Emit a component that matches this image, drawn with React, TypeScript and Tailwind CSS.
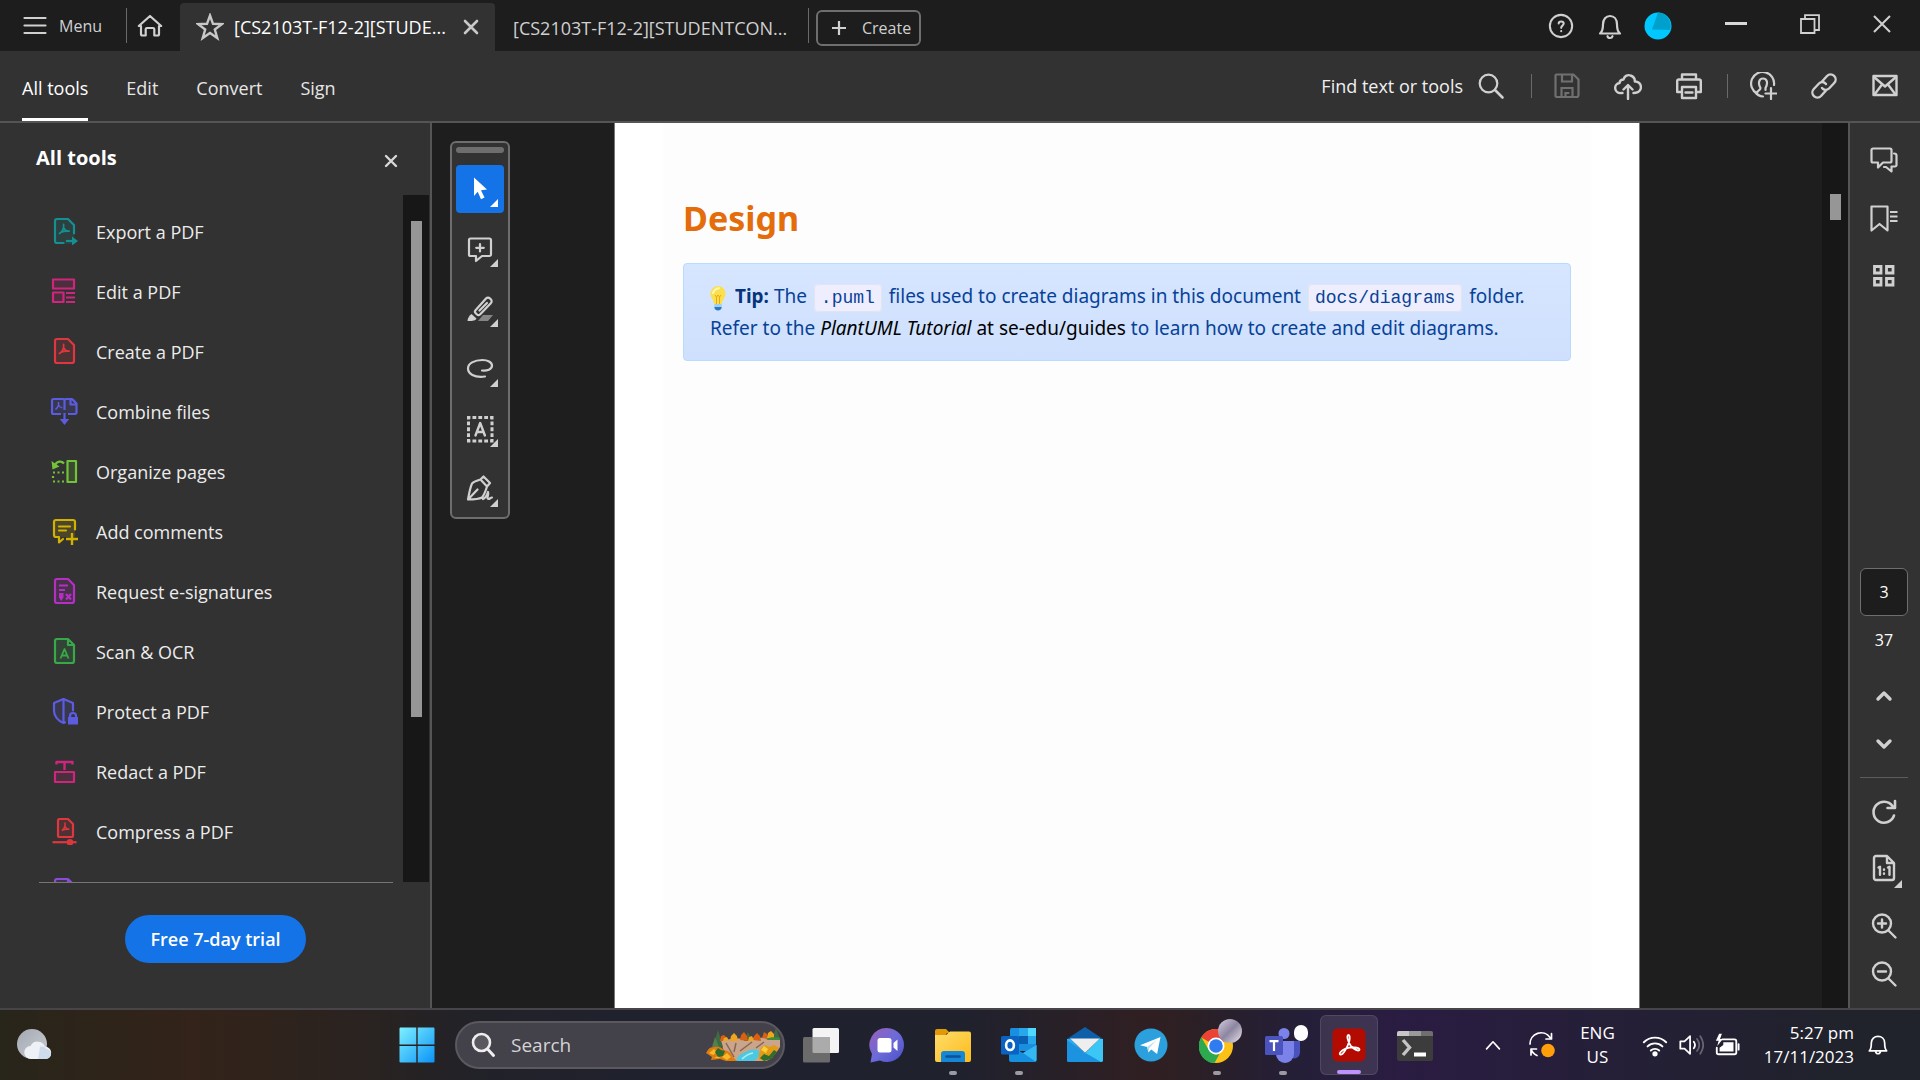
import React from 'react';

type P = { className?: string };

const AcroMark = () => (
  <g fill="none" strokeWidth="1.7" strokeLinecap="round" strokeLinejoin="round">
    <path d="M13.6 7.4v3.400c-.6 2.400-2.200 4.600-4.200 5.800M13.6 10.8c1 2 3 3.200 5.600 3.400M10.6 15.4c2.600-1.200 5.400-1.600 8.400-1.200" />
  </g>
);

const ListIcon = ({ color, children }: { color: string; children: React.ReactNode }) => (
  <svg viewBox="0 0 28 28" className="h-7 w-7 shrink-0" fill={color} fillOpacity="0.16" stroke={color} strokeWidth="2.2" strokeLinejoin="round" aria-hidden="true">
    {children}
  </svg>
);

const tools: { label: string; color: string; art: React.ReactNode }[] = [
  {
    label: 'Export a PDF',
    color: '#168f92',
    art: (
      <>
        <path stroke="none" d="M5 4a2 2 0 0 1 2-2h11l6 6v19H5z" />
        <path fill="none" strokeLinecap="round" d="M13.5 26H7a2 2 0 0 1-2-2V4a2 2 0 0 1 2-2h11l6 6v8.5" />
        <AcroMark />
        <path fill="none" d="M16 24h8" />
        <path stroke="none" fillOpacity="1" d="M22 19.5l6 4.5-6 4.5z" />
      </>
    ),
  },
  {
    label: 'Edit a PDF',
    color: '#d0257f',
    art: (
      <>
        <rect x="3" y="2.5" width="21" height="9" />
        <rect x="3" y="15.5" width="10.5" height="9.5" />
        <path fill="none" d="M16 16h9M16 20.500h9M16 25h9" />
      </>
    ),
  },
  {
    label: 'Create a PDF',
    color: '#df3640',
    art: (
      <>
        <path d="M5 4a2 2 0 0 1 2-2h11l6 6v16a2 2 0 0 1-2 2H7a2 2 0 0 1-2-2z" />
        <AcroMark />
      </>
    ),
  },
  {
    label: 'Combine files',
    color: '#5c5ce0',
    art: (
      <>
        <path stroke="none" d="M2 2h24v15H2z" />
        <path fill="none" d="M11 17H3.500a1.500 1.500 0 0 1-1.500-1.500v-12A1.500 1.500 0 0 1 3.500 2H13c1 0 1.500.5 1.500 1.500v9.500M14.500 3.500c0-1 .5-1.500 1.500-1.500h6l4.500 4.500v9A1.500 1.500 0 0 1 25 17h-7M20.500 2.500v5H26" />
        <path fill="none" strokeWidth="1.5" d="M8.500 5v3c-.5 2-1.600 3.600-3 4.500M8.500 8c.8 1.600 2 2.600 3.800 2.800" />
        <path fill="none" d="M14.500 16v8" />
        <path stroke="none" fillOpacity="1" d="M9.800 22h9.400l-4.700 6z" />
      </>
    ),
  },
  {
    label: 'Organize pages',
    color: '#72c23a',
    art: (
      <>
        <rect x="17.5" y="4" width="8.5" height="21" />
        <path fill="none" d="M14 6.500C11.500 3.500 7 4 5 8" />
        <path stroke="none" fillOpacity="1" d="M1.500 4l1 8.500 7-3z" />
        <path fill="none" strokeDasharray="2 2.5" d="M3 15.500h12M3 24.500h12" />
        <path fill="none" d="M3 19v2" />
      </>
    ),
  },
  {
    label: 'Add comments',
    color: '#d2b100',
    art: (
      <>
        <path stroke="none" d="M4 3h21v17H4z" />
        <path fill="none" strokeLinecap="round" d="M25 12.500V5a2 2 0 0 0-2-2H6a2 2 0 0 0-2 2v13a2 2 0 0 0 2 2h3v5.500l4-3.500M9 9.500h11M9 13.500h7" />
        <path fill="none" strokeWidth="2.4" d="M22 16v12M16 22h12" />
      </>
    ),
  },
  {
    label: 'Request e-signatures',
    color: '#b62fc4',
    art: (
      <>
        <path d="M5 4a2 2 0 0 1 2-2h11l6 6v16a2 2 0 0 1-2 2H7a2 2 0 0 1-2-2z" />
        <path fill="none" d="M9 8.500h9M9 13h6" />
        <path stroke="none" fillOpacity="1" d="M9 16h4.500v4.500L11.200 24 9 20.500z" />
        <path fill="none" d="M16 17l5 5.500M21 17l-5 5.500" />
      </>
    ),
  },
  {
    label: 'Scan & OCR',
    color: '#39a84a',
    art: (
      <>
        <path d="M5 4a2 2 0 0 1 2-2h11l6 6v16a2 2 0 0 1-2 2H7a2 2 0 0 1-2-2zM18 2.500V8h5.500" />
        <path fill="none" strokeWidth="1.8" d="M10.500 21.500l4-9.500 4 9.500M12 18.500h5" />
      </>
    ),
  },
  {
    label: 'Protect a PDF',
    color: '#5c5ce0',
    art: (
      <>
        <path stroke="none" d="M4 6l9-4 10 4v14l-9 7c-6-3-10-7-10-12z" />
        <path fill="none" strokeLinecap="round" d="M23 13.500V6L13.500 2 4 6v8c0 5 4 10 9.500 12l1.500-.5M13.500 2v24" />
        <rect x="18" y="20" width="10" height="7.5" stroke="none" fillOpacity="1" />
        <path fill="none" d="M20 20.500v-1.500a3 3 0 0 1 6 0v1.500" />
      </>
    ),
  },
  {
    label: 'Redact a PDF',
    color: '#d0257f',
    art: (
      <>
        <rect x="5" y="15" width="19" height="10" />
        <path fill="none" strokeWidth="2.4" d="M6.500 7.500V5h16v2.500M14.500 5v8" />
      </>
    ),
  },
  {
    label: 'Compress a PDF',
    color: '#df3640',
    art: (
      <>
        <path d="M8 3.500A1.500 1.500 0 0 1 9.500 2H18l5 5v11.500a1.500 1.500 0 0 1-1.500 1.500h-12A1.500 1.500 0 0 1 8 18.500z" />
        <path fill="none" strokeWidth="1.5" d="M15 5.500v3.500c-.5 2-1.600 3.600-3.200 4.800M15 9.500c.8 1.800 2.200 2.600 4.400 2.800M12.500 13.200c2-1 4.400-1.200 6.500-.9" />
        <path fill="none" d="M2.500 25.200h24" />
        <circle cx="20" cy="25.2" r="2.2" />
      </>
    ),
  },
];

const S = ({ className = 'h-7 w-7', children, w = 2.2 }: { className?: string; children: React.ReactNode; w?: number }) => (
  <svg viewBox="0 0 28 28" className={className} fill="none" stroke="currentColor" strokeWidth={w} strokeLinejoin="round" strokeLinecap="round" aria-hidden="true">
    {children}
  </svg>
);

function TitleBar() {
  return (
    <header className="flex h-[51px] shrink-0 items-center bg-[#1d1d1d] text-[#d0d0d0]">
      <button className="ml-[23px] flex items-center gap-3 pt-px text-base">
        <svg viewBox="0 0 24 24" className="h-6 w-6" fill="none" stroke="currentColor" strokeWidth="2.2" strokeLinecap="round" aria-hidden="true">
          <path d="M1.500 4h21M1.500 11.500h21M1.500 19h21" />
        </svg>
        Menu
      </button>
      <span className="ml-6 h-[35px] w-px bg-[#6a6a6a]" />
      <button aria-label="Home" className="ml-[9px]">
        <S>
          <path d="M5 14H2.800L14 4l11.200 10H23v8a1.500 1.500 0 0 1-1.500 1.500h-3.200v-6.300a1.300 1.300 0 0 0-1.300-1.200h-6a1.300 1.300 0 0 0-1.300 1.200v6.300H6.500A1.500 1.500 0 0 1 5 22z" />
        </S>
      </button>
      <div className="ml-4 flex h-12 w-[315px] items-center self-end rounded-t bg-[#323232] pl-4 text-white">
        <S className="h-7 w-7 text-[#c8c8c8]" w={2.4}>
          <path strokeLinejoin="miter" d="M14 2.500l3 8.300 8.800.3-7 5.400 2.500 8.500-7.300-5-7.300 5 2.500-8.500-7-5.400 8.800-.3z" />
        </S>
        <button className="ml-2.5 text-lg">[CS2103T-F12-2][STUDE...</button>
        <button aria-label="Close tab" className="ml-auto mr-4 text-[#c8c8c8]">
          <svg viewBox="0 0 16 16" className="h-4 w-4" fill="none" stroke="currentColor" strokeWidth="2.6" strokeLinecap="round" aria-hidden="true">
            <path d="M2 2l12 12M14 2L2 14" />
          </svg>
        </button>
      </div>
      <button className="flex h-[35px] w-[314px] items-center border-r border-[#6a6a6a] pl-[18px] pt-1 text-lg">[CS2103T-F12-2][STUDENTCON...</button>
      <button className="ml-[7px] mt-1 flex h-9 w-[105px] items-center gap-3.5 rounded-md border-2 border-[#6e6e6e] pl-3 text-base">
        <svg viewBox="0 0 18 18" className="h-[18px] w-[18px]" fill="none" stroke="currentColor" strokeWidth="2.2" aria-hidden="true">
          <path d="M9 2v14M2 9h14" />
        </svg>
        Create
      </button>
      <div className="ml-auto flex items-center pr-[29px]">
        <button aria-label="Help">
          <S className="h-[26px] w-[26px]">
            <circle cx="14" cy="14" r="12" />
            <path d="M11.500 11.300c0-3 5.400-3 5.400 0 0 2-2.700 2.200-2.700 4.700M14.200 19.500v.2" />
          </S>
        </button>
        <button aria-label="Notifications" className="ml-[22px]">
          <S>
            <path d="M4 21.500c2.500-2 3-4 3-9C7 7 10 4 14 4s7 3 7 8.500c0 5 .5 7 3 9zM11.500 24.200c.6 2.400 4.400 2.400 5 0" />
          </S>
        </button>
        <button aria-label="Account" className="ml-5">
          <svg viewBox="0 0 28 28" className="h-7 w-7" aria-hidden="true">
            <circle cx="14" cy="14" r="13.5" fill="#00c8ff" />
            <path d="M14 .5A13.500 13.500 0 0 1 26 18L8 17.500z" fill="#00a0cc" />
          </svg>
        </button>
        <button aria-label="Minimize" className="ml-[53px] pb-1">
          <span className="block h-[3px] w-[22px] bg-[#d8d8d8]" />
        </button>
        <button aria-label="Restore" className="ml-[53px] pb-1">
          <svg viewBox="0 0 20 20" className="h-5 w-5" fill="none" stroke="currentColor" strokeWidth="1.8" aria-hidden="true">
            <path d="M1 5h13.500v14H1zM5 5V1.200h14V16h-4.500" />
          </svg>
        </button>
        <button aria-label="Close" className="ml-[53px] pb-1">
          <svg viewBox="0 0 18 18" className="h-[18px] w-[18px]" fill="none" stroke="currentColor" strokeWidth="2" aria-hidden="true">
            <path d="M1 1l16 16M17 1L1 17" />
          </svg>
        </button>
      </div>
    </header>
  );
}

function ToolBar() {
  return (
    <div className="flex h-[72px] shrink-0 items-center border-b-2 border-[#555] bg-[#323232] text-lg text-[#e6e6e6]">
      <nav className="flex h-full items-stretch gap-[38px] pl-[22px]">
        <button className="flex items-center border-b-[3px] border-white pt-1.5 text-white">All tools</button>
        <button className="pt-1">Edit</button>
        <button className="pt-1">Convert</button>
        <button className="pt-1">Sign</button>
      </nav>
      <div className="ml-auto flex items-center pr-[21px] text-[#d0d0d0]">
        <button className="flex items-center gap-3.5 text-[#f0f0f0]">
          Find text or tools
          <S className="h-7 w-7 text-[#d0d0d0]">
            <circle cx="11.5" cy="11.5" r="8.8" />
            <path d="M18 18l7.500 7.500" strokeWidth="2.6" />
          </S>
        </button>
        <span className="ml-[26px] h-6 w-px bg-[#6a6a6a]" />
        <button aria-label="Save" disabled className="ml-[21px] text-[#707070]">
          <S>
            <path d="M3.500 2.500h17l5 5V23a2 2 0 0 1-2 2h-20a1 1 0 0 1-1-1V3.500a1 1 0 0 1 1-1zM9 3v6.500h10V3M8.500 25v-9h11v9M12.500 25v-4h3" strokeLinejoin="miter" />
          </S>
        </button>
        <button aria-label="Upload to cloud" className="ml-[33px]">
          <S w={2.4}>
            <path d="M8.500 21H7a5 5 0 0 1-1.500-10 4 4 0 0 1 4-3.500c1-4 4.500-5 7-4 3 1 4.500 3.500 4.300 6a5.500 5.500 0 0 1 1 11.200L19.500 21M14 27V13.500M9.500 17.500l4.500-4.500 4.500 4.500" />
          </S>
        </button>
        <button aria-label="Print" className="ml-[33px]">
          <S w={2.4}>
            <path d="M7 7V2.500h14V7M6.500 20H2.200V9a1.500 1.500 0 0 1 1.500-1.500h20.600A1.500 1.500 0 0 1 25.800 9v11h-4.300M7 15h14v11H7zM10.500 20.500h7" />
          </S>
        </button>
        <span className="ml-6 h-6 w-px bg-[#6a6a6a]" />
        <button aria-label="Share with others" className="ml-[21px]">
          <S>
            <path d="M8 21.500A11.500 11.500 0 1 1 25 13M8 21.500c0-3 3.500-3 3.500-5.500C9 12 9.500 6.500 14 6.500s5 5 2.500 9.500v2M6 20a11 11 0 0 0 8 4.500M22 16v11M16.500 21.500h11" />
          </S>
        </button>
        <button aria-label="Copy link" className="ml-[33px]">
          <S w={2.4}>
            <path d="M12 9.500l5-5.500a5 5 0 0 1 7.200 7L19 16.500c-2 2-5 2-7-.5M16 18.500L11 24a5 5 0 0 1-7.200-7L9 11.500c2-2 5-2 7 .5" />
          </S>
        </button>
        <button aria-label="Email" className="ml-[33px]">
          <S w={2.4}>
            <rect x="2.5" y="4" width="23" height="19" />
            <path d="M3 5l11 9.500L25 5M3.500 22.500l7.500-10M24.500 22.500L17 12.500" />
          </S>
        </button>
      </div>
    </div>
  );
}

function ToolsPanel() {
  return (
    <aside className="flex w-[432px] shrink-0 flex-col border-r-2 border-[#555] bg-[#323232]">
      <div className="flex h-[72px] shrink-0 items-center justify-between pb-0.5 pl-9 pr-8">
        <h2 className="text-xl font-bold text-white">All tools</h2>
        <button aria-label="Close panel" className="pt-1.5 text-[#d8d8d8]">
          <svg viewBox="0 0 14 14" className="h-3.5 w-3.5" fill="none" stroke="currentColor" strokeWidth="2.4" strokeLinecap="round" aria-hidden="true">
            <path d="M2 2l10 10M12 2L2 12" />
          </svg>
        </button>
      </div>
      <div className="flex min-h-0 flex-1">
        <ul className="min-w-0 flex-1 overflow-hidden pt-1.5 text-lg text-[#ececec]">
          {tools.map((t) => (
            <li key={t.label}>
              <button className="flex h-[60px] w-full items-center gap-[18px] pl-[50px] text-left">
                <ListIcon color={t.color}>{t.art}</ListIcon>
                <span className="pt-0.5">{t.label}</span>
              </button>
            </li>
          ))}
          <li className="flex h-[60px] items-center pl-[50px]">
            <ListIcon color="#8a4cd6">
              <path d="M5 4a2 2 0 0 1 2-2h11l6 6v16a2 2 0 0 1-2 2H7a2 2 0 0 1-2-2zM18 2.500V8h5.500" />
            </ListIcon>
          </li>
        </ul>
        <div className="mr-px flex w-[26px] flex-col items-center bg-[#171717] pt-[26px]">
          <div className="h-3/4 w-[11px] bg-[#969696]" />
        </div>
      </div>
      <div className="flex h-[126px] shrink-0 flex-col">
        <div className="ml-[39px] mr-[37px] h-px shrink-0 bg-[#757575]" />
        <button className="ml-[125px] mt-8 h-12 w-[181px] rounded-full bg-[#1473e6] text-lg font-semibold text-white">Free 7-day trial</button>
      </div>
    </aside>
  );
}

const Corner = ({ className = '' }: P) => (
  <svg viewBox="0 0 8 8" className={`h-2 w-2 ${className}`} fill="currentColor" aria-hidden="true">
    <path d="M8 0v8H0z" />
  </svg>
);

const quick: { label: string; active?: boolean; art: React.ReactNode }[] = [
  {
    label: 'Select',
    active: true,
    art: <path fill="currentColor" stroke="none" d="M8 2.500l13 12-6 .8 3.500 7.200-3.500 1.700-3.300-7.400L8 21z" />,
  },
  {
    label: 'Add comment',
    art: (
      <path d="M4.500 3.500h19a1.500 1.500 0 0 1 1.500 1.500v14.500a1.500 1.500 0 0 1-1.500 1.500H16l-6 5v-5H4.500A1.500 1.500 0 0 1 3 19.500V5a1.500 1.500 0 0 1 1.500-1.500zM14 9v7.500M10.200 12.800h7.600" />
    ),
  },
  {
    label: 'Highlight',
    art: (
      <>
        <path stroke="none" fill="#858585" d="M17 20h10l-5 6H12z" />
        <path d="M20 3.500a2.800 2.800 0 0 1 4 0l.8.8a2.800 2.800 0 0 1 0 4L14 19.500c-1 .8-2 .8-3 0l-1.500-1.500c-.8-.8-.8-1.800 0-2.800zM13.500 15.500L21 8" />
        <path stroke="none" fill="currentColor" d="M5.500 19l5 4.500c-1 2-3 2.500-9 2.500 0-3 2-5.500 4-7z" />
      </>
    ),
  },
  {
    label: 'Draw',
    art: <path d="M16 15.500c5 .5 10-1 10-5 0-3.500-4.500-5.500-9.500-5.500C8 5 2 8.500 2 13.500S8 23 19 21.500" />,
  },
  {
    label: 'Select text',
    art: (
      <>
        <rect x="2.5" y="2.5" width="23.5" height="23.5" strokeWidth="3" strokeDasharray="3.8 2.075" strokeDashoffset="1.9" strokeLinecap="butt" strokeLinejoin="miter" />
        <path d="M9.500 20.500L14.200 8l4.700 12.500M11 17h6.500" strokeWidth="2.4" />
      </>
    ),
  },
  {
    label: 'Fill and sign',
    art: (
      <path d="M14.500 4.500l3-3 6.500 6.500-3 3.500zM14.500 4.500C11 5.500 8 6.500 6 8.500 4 13 3 19 2 24.500c5.500 0 11-.5 14-2 2-2.500 3.500-6 5-11M2.500 24l9-9.500M17 24c2.500-1 4-4 5-7 1 3-2 7 .5 7 1.500 0 2-1.500 3.500-1.500" />
    ),
  },
];

function QuickTools() {
  return (
    <div className="absolute left-[18px] top-[18px] flex w-[60px] flex-col items-center rounded-md border-2 border-[#6e6e6e] bg-[#323232] pb-1 pt-1">
      <div className="mb-3 h-1.5 w-12 rounded-full bg-[#6e6e6e]" />
      <div className="flex flex-col gap-3">
        {quick.map((q) => (
          <button key={q.label} aria-label={q.label} className={q.active ? 'relative flex h-12 w-12 items-center justify-center rounded bg-[#1473e6] text-white' : 'relative flex h-12 w-12 items-center justify-center text-[#d0d0d0]'}>
            <S>{q.art}</S>
            <Corner className="absolute bottom-1.5 right-1.5" />
          </button>
        ))}
      </div>
    </div>
  );
}

const Bulb = () => (
  <svg viewBox="0 0 16 26" className="-my-1 inline-block h-[26px] w-4 align-middle" role="img" aria-label="light bulb">
    <path d="M8 1a7.500 7.500 0 0 0-7.500 7.500C.5 13 4 14.500 4.300 20h7.400c.3-5.500 3.800-7 3.800-11.500A7.500 7.500 0 0 0 8 1z" fill="#fbe04c" />
    <path d="M3 8c1-3 3-4.500 6-4.800" fill="none" stroke="#fff7b8" strokeWidth="2" strokeLinecap="round" />
    <path d="M5 10l1.500 2.200L8 10l1.500 2.200L11 10M6.500 12v7M9.500 12v7" fill="none" stroke="#e9a91c" strokeWidth="1" />
    <rect x="4.3" y="19" width="7.4" height="3" fill="#9fd0ef" />
    <path d="M4.300 22h7.400c0 2-1.500 3.500-3.700 3.500S4.300 24 4.300 22z" fill="#2c77c4" />
  </svg>
);

const Code = ({ children }: { children: React.ReactNode }) => (
  <code className="mx-0.5 rounded border border-[#e4e4ee] bg-[#eeeefe] px-1.5 py-[3px] font-['Liberation_Mono',monospace] text-lg leading-none">{children}</code>
);

function Document() {
  return (
    <main className="relative flex min-w-0 flex-1 justify-center overflow-hidden bg-[#1e1e1e] font-['Noto_Sans',sans-serif]">
      <article className="w-full max-w-[1026px] border-x border-[#777] bg-white px-12">
        <div className="h-full bg-[#fdfdfd] px-5 pt-[71px]">
          <h1 className="text-[34px] font-bold leading-[48px] text-[#e46c0a]">Design</h1>
          <p className="mt-[21px] rounded border border-[#b8daff] bg-linear-to-b from-[#d6e6ff] to-[#cfe0fe] py-4 pl-[26px] pr-4 text-[19px] leading-8 text-[#084298]">
            <Bulb /> <strong className="ml-1 text-[#06357a]">Tip:</strong> The <Code>.puml</Code> files used to create diagrams in this document <Code>docs/diagrams</Code> folder.
            <br />
            Refer to the{' '}
            <a href="#guides" className="text-black">
              <em>PlantUML Tutorial</em> at se-edu/guides
            </a>{' '}
            to learn how to create and edit diagrams.
          </p>
        </div>
      </article>
      <QuickTools />
    </main>
  );
}

function RightRail() {
  const btn = 'flex h-12 w-12 shrink-0 items-center justify-center';
  return (
    <aside className="flex w-[72px] shrink-0 flex-col items-center border-l-2 border-[#555] bg-[#323232] pb-2.5 pr-0.5 pt-2 text-[#d0d0d0]">
      <button aria-label="Comments" className="flex h-[58px] w-12 items-center justify-center">
        <S>
          <path d="M3 2.500h17A1.500 1.500 0 0 1 21.500 4v11a1.500 1.500 0 0 1-1.500 1.500H13L8 21.500v-5H3A1.500 1.500 0 0 1 1.500 15V4A1.500 1.500 0 0 1 3 2.500zM24 7.500c1.500 0 2.500.8 2.500 2V19a1.500 1.500 0 0 1-1.500 1.500h-3.500v5L16 21h-2" />
        </S>
      </button>
      <button aria-label="Bookmarks" className="flex h-[58px] w-12 items-center justify-center">
        <S>
          <path d="M1.500 2.500h16v24l-8-6.500-8 6.500zM20 8h7.500M20 12.500h7.500M20 17h7.500" strokeLinecap="butt" />
        </S>
      </button>
      <button aria-label="Page thumbnails" className="flex h-[58px] w-12 items-center justify-center">
        <S w={2.8}>
          <path strokeLinejoin="miter" d="M4.500 4.500h6.500V11H4.500zM16.500 4.500H23V11h-6.500zM4.500 16.500h6.500V23H4.500zM16.500 16.500H23V23h-6.500z" />
        </S>
      </button>
      <input aria-label="Page number" defaultValue="3" className="mt-auto h-12 w-12 shrink-0 rounded-md border border-[#6e6e6e] bg-[#1d1d1d] text-center text-base text-white" />
      <span className="mb-2 flex h-12 shrink-0 items-center text-base text-white">37</span>
      <button aria-label="Previous page" className={btn}>
        <S w={3.4}><path d="M8 17l6-6 6 6" /></S>
      </button>
      <button aria-label="Next page" className={btn}>
        <S w={3.4}><path d="M8 11l6 6 6-6" /></S>
      </button>
      <div className="mb-2.5 mt-[9px] h-px w-12 shrink-0 bg-[#5c5c5c]" />
      <button aria-label="Rotate" className={btn}>
        <S w={2.6}><path d="M24 17.500A10.500 10.500 0 1 1 22.500 8M25 3v7h-7.500" /></S>
      </button>
      <button aria-label="Actual size" className={`relative mb-2.5 mt-2 ${btn}`}>
        <S w={2.4}>
          <path d="M4 4a2 2 0 0 1 2-2h11l7 7v15a2 2 0 0 1-2 2H6a2 2 0 0 1-2-2zM17 2.500V9h6.500M8.500 13.500l1.500-.8v8M18 13.500l1.500-.8v8M14 15.500v.2M14 19.500v.2" />
        </S>
        <Corner className="absolute bottom-1 right-1.5" />
      </button>
      <button aria-label="Zoom in" className={btn}>
        <S w={2.4}>
          <circle cx="12" cy="11.5" r="9" />
          <path d="M18.500 18.500l7 7M12 7.500v8M8 11.500h8" />
        </S>
      </button>
      <button aria-label="Zoom out" className={btn}>
        <S w={2.4}>
          <circle cx="12" cy="11.5" r="9" />
          <path d="M18.500 18.500l7 7M8 11.500h8" />
        </S>
      </button>
    </aside>
  );
}

const Scenery = () => (
  <svg viewBox="0 0 74 34" className="h-[34px] w-[74px]" aria-hidden="true">
    <path d="M14 13c8-3 40-4 60-3v9c-4 6-8 12-14 14H22z" fill="#c9a58c" />
    <path d="M20 15l8 14M30 15l-2 9M46 14l-12 9M58 14l-8 6" stroke="#8a6553" strokeWidth="1.5" />
    <path d="M12 2l-5 17h10zM42 4l-4 9h8zM70 0l-4 11h8z" fill="#3f6b43" />
    <path d="M9 9l-3 10h7z" fill="#557f4c" />
    <g fill="#d9600f">
      <path d="M14 13l1-5 3-1 3 3 1 3zM34 12l1-5 3-3 3 4 1 5zM47 12l1-4 3-3 3 3 1 5zM56 10l2-6 3 2 1 5z" />
    </g>
    <g fill="#f0a51c">
      <path d="M24 13l1-5 3-3 3 3 1 5zM42 13l1-4 3-1 2 5zM61 10l1-5 3-2 3 3v5z" />
      <path d="M17 13l1-3 3-1 2 4z" />
    </g>
    <path d="M60 11c3-2 12-2 14-1v2H62z" fill="#3d8a3c" />
    <path d="M30 33c2-6 6-8 10-9 4-3 10-3 13-1 1 5-2 9-6 10z" fill="#4cc9e0" />
    <path d="M36 31c3-3 6-5 11-6" stroke="#a9edf5" strokeWidth="1.5" fill="none" />
    <path d="M0 25c2-3 3-6 8-6 4-1 8 0 10 3 5 1 8 4 9 7l4 4H20l-6-2-9 1 1-3z" fill="#dd7d10" />
    <path d="M3 25l5-4 3 3-4 3zM16 29l5-4 4 4-4 3zM8 30l4-2 2 2z" fill="#f7b928" />
    <path d="M9 24l3-4 3 2 4 1-2 5-5 1z" fill="#2c6a2f" />
    <path d="M53 26l2-6 4-3 4 2 5-2 5 3-3 4-4 6-6 3-7-1z" fill="#e39a14" />
    <path d="M55 22l3-4 4 3-2 4z" fill="#f9cf35" />
    <path d="M54 30l4-4 5 2 5-6 3 2-6 7-7 2z" fill="#2f6e2f" />
  </svg>
);

const TI = ({ children, className = 'h-9 w-9' }: { children: React.ReactNode; className?: string }) => (
  <svg viewBox="0 0 36 36" className={className} aria-hidden="true">{children}</svg>
);

const apps: { label: string; dot?: boolean; active?: boolean; art: React.ReactNode }[] = [
  {
    label: 'Task view',
    art: (
      <>
        <rect x="9.5" y="1" width="26.5" height="25" rx="1.5" fill="#f4f4f4" />
        <rect x="0" y="10" width="27" height="25.5" rx="1.5" fill="#6b6b6b" />
        <path d="M9.500 10H27v16H11a1.500 1.500 0 0 1-1.500-1.500z" fill="#ababab" />
      </>
    ),
  },
  {
    label: 'Chat',
    art: (
      <>
        <path d="M18 1a17 17 0 1 1-7 32.500L1.500 35.500 3 27A17 17 0 0 1 18 1z" fill="url(#chat)" />
        <rect x="8.5" y="11" width="14" height="14.5" rx="2.5" fill="#fff" />
        <path d="M24.500 16l4-3.500v11.500l-4-3.500z" fill="#fff" />
      </>
    ),
  },
  {
    label: 'File Explorer',
    dot: true,
    art: (
      <>
        <path d="M0 4a2 2 0 0 1 2-2h9l4 4h-3l-2 3H0z" fill="#e09a06" />
        <path d="M0 8h11l4-3.500h19a2 2 0 0 1 2 2V33a2 2 0 0 1-2 2H2a2 2 0 0 1-2-2z" fill="url(#folder)" />
        <path d="M6 35v-8a3 3 0 0 1 3-3h18a3 3 0 0 1 3 3v8z" fill="#1686d6" />
        <path d="M11.500 29.500h13" stroke="#0b5394" strokeWidth="2.5" strokeLinecap="round" />
      </>
    ),
  },
  {
    label: 'Outlook',
    dot: true,
    art: (
      <>
        <rect x="9" y="1" width="26" height="23" rx="1.5" fill="#1a8fe0" />
        <path d="M18 1h9v8h-9z" fill="#28a8ea" /><path d="M27 1h8v8h-8z" fill="#50d9ff" />
        <path d="M18 9h9v8h-9z" fill="#0a5fb0" /><path d="M27 9h8v8h-8z" fill="#28a8ea" />
        <path d="M8 18l14 8 13.500-8v15a2 2 0 0 1-2 2H10a2 2 0 0 1-2-2z" fill="#1490df" />
        <path d="M35.500 18v15a2 2 0 0 1-1 1.500L22 26z" fill="#35b8f1" />
        <rect x="0" y="9" width="18" height="18.5" rx="1.5" fill="#0a63c2" />
        <ellipse cx="9" cy="18.2" rx="3.9" ry="4.8" fill="none" stroke="#fff" strokeWidth="2.6" />
      </>
    ),
  },
  {
    label: 'Mail',
    art: (
      <>
        <path d="M0 12L18 0l18 12v4H0z" fill="#0f5ea8" />
        <path d="M3 11.500h30L18 26z" fill="#eee" />
        <path d="M0 12h3.500L18 26.500 32.500 12H36v21a2 2 0 0 1-2 2H2a2 2 0 0 1-2-2z" fill="#2ab0f0" />
        <path d="M0 13v20a2 2 0 0 0 2 2h32L15 23.500z" fill="#1c93e0" />
        <path d="M36 12v21a2 2 0 0 1-1.500 1.900L15 24l3 2.500L32.500 12z" fill="#3cc6f6" />
      </>
    ),
  },
  {
    label: 'Telegram',
    art: (
      <>
        <circle cx="18" cy="18" r="16.5" fill="#2ba0dc" />
        <path d="M7 18.200L27.500 10l-3.400 17-5.800-4.400-3 3-1-5.600z" fill="#fff" />
        <path d="M14.300 20l9-6.800-7 7.800-1 4.600z" fill="#b9dcf2" />
      </>
    ),
  },
  {
    label: 'Chrome',
    dot: true,
    art: (
      <>
        <circle cx="17" cy="19" r="17" fill="#fbc116" />
        <path d="M17 19L2.300 10.500A17 17 0 0 1 31.700 10.500z" fill="#ea4335" />
        <path d="M17 19l-4 17A17 17 0 0 1 2.300 10.500L9.600 23z" fill="#2da94f" />
        <path d="M9.600 23.300a8.500 8.500 0 0 0 11 3.400L15.500 36A17 17 0 0 1 2.300 10.500z" fill="#2da94f" />
        <circle cx="17" cy="19" r="8.5" fill="#fff" />
        <circle cx="17" cy="19" r="6.8" fill="#2f7cf0" />
      </>
    ),
  },
  {
    label: 'Teams',
    dot: true,
    art: (
      <>
        <circle cx="19" cy="6.5" r="5.5" fill="#7b83eb" />
        <path d="M26 14h9v12a6 6 0 0 1-8 5z" fill="#4a52bd" />
        <path d="M11 14h18v13a9 9 0 0 1-18 0z" fill="#7b83eb" />
        <rect x="0" y="9" width="18" height="19" rx="1.5" fill="#4b53bc" />
        <path d="M4.500 14.200h9M9 14.200V24" stroke="#fff" strokeWidth="2.2" />
      </>
    ),
  },
  {
    label: 'Adobe Acrobat',
    dot: true,
    active: true,
    art: (
      <>
        <rect x="1.5" y="1.5" width="33" height="33" rx="5" fill="#b30b00" />
        <path d="M17.600 8c-2.400 0-1 6 2 10.500 3 4.200 8.400 6.200 8.900 4.200.4-2.600-8.500-2.900-13.700-1-4.400 1.700-7.200 4.800-5.600 5.800 2.600 1.300 7.400-7.600 9-13 .9-3.500.6-6.500-.6-6.500z" fill="none" stroke="#fff" strokeWidth="1.8" />
      </>
    ),
  },
  {
    label: 'Terminal',
    art: (
      <>
        <rect x="0" y="4" width="36" height="30" rx="2" fill="#3c3c3c" />
        <path d="M0 6a2 2 0 0 1 2-2h10v5H0z" fill="#c8c8c8" /><path d="M12 4h12v5H12z" fill="#9a9a9a" /><path d="M24 4h10a2 2 0 0 1 2 2v3H24z" fill="#6f6f6f" />
        <path d="M6 13l6.500 7.500L6 28" fill="none" stroke="#c4c4c4" strokeWidth="3.4" />
        <path d="M17 25.500h12v4H17z" fill="#fff" />
      </>
    ),
  },
];

function Taskbar() {
  return (
    <footer className="flex h-[72px] shrink-0 items-center border-t-2 border-[#47444a] bg-linear-to-r from-[#28241a] via-[#1f212e] via-35% to-[#20222c] text-white">
      <div className="flex h-full flex-1 items-center bg-linear-to-r from-[#28251a] from-0% via-[#33231a] via-10% to-transparent to-25%">
        <div className="flex h-full flex-1 items-center bg-linear-to-r from-transparent from-50% via-[#301f22] via-60% to-transparent to-68%">
          <div className="flex h-full flex-1 items-center bg-linear-to-r from-transparent from-62% via-[#2a1c42] via-73% to-transparent to-95%">
            <svg width="0" height="0" className="absolute" aria-hidden="true">
              <defs>
                <linearGradient id="chat" x1="0" y1="0" x2="1" y2="1"><stop offset="0" stopColor="#9a5fb8" /><stop offset="0.5" stopColor="#6d6bd8" /><stop offset="1" stopColor="#4a4fc8" /></linearGradient>
                <linearGradient id="folder" x1="0" y1="0" x2="1" y2="1"><stop offset="0" stopColor="#ffdd6e" /><stop offset="1" stopColor="#fdbb18" /></linearGradient>
                <linearGradient id="win" x1="0" y1="0" x2="1" y2="1"><stop offset="0" stopColor="#7ef0ff" /><stop offset="1" stopColor="#0b93f7" /></linearGradient>
                <linearGradient id="moon" x1="0" y1="0" x2="1" y2="1"><stop offset="0" stopColor="#a4a9b2" /><stop offset="1" stopColor="#c9ccd2" /></linearGradient>
              </defs>
            </svg>
            <div className="flex w-[388px] shrink-0 pl-4">
              <button aria-label="Weather">
                <TI>
                  <circle cx="16" cy="17" r="15" fill="url(#moon)" />
                  <path d="M15 32a6.500 6.500 0 0 1-.5-13 8 8 0 0 1 14.500.5 6.300 6.300 0 0 1 1 12.500z" fill="#eef1f5" />
                  <path d="M24 20c2-1 5-.5 6 2a5 5 0 0 1 0 10h-8z" fill="#cfdcec" />
                </TI>
              </button>
            </div>
            <button aria-label="Start" className="flex w-[58px] shrink-0 justify-center">
              <TI>
                <path d="M1 .5h16.300V17.500H.5V1.500zM18.700.5H35l.5 1v16H18.700zM.5 19h16.800v16.500H1.500L.5 35zM18.700 19h16.800v16l-1 .5H18.700z" fill="url(#win)" />
              </TI>
            </button>
            <label className="ml-[9px] flex h-12 w-[330px] shrink-0 items-center rounded-full border-2 border-[#5c5860] bg-[#434149] pl-3 pr-[3px]">
              <S className="h-7 w-7 shrink-0 text-[#eee]" w={2.6}>
                <circle cx="12.5" cy="11.5" r="8.5" fill="#5a585e" />
                <path d="M19 18.500l5.500 6" strokeWidth="3" />
              </S>
              <input type="search" aria-label="Search" placeholder="Search" className="ml-3.5 min-w-0 flex-1 bg-transparent text-[19px] placeholder:text-[#d4d4d4]" />
              <Scenery />
            </label>
            <div className="ml-[7px] flex shrink-0 gap-2">
              {apps.map((a) => (
                <button key={a.label} aria-label={a.label} className={a.active ? 'relative flex h-[60px] w-[58px] items-center justify-center rounded-md border border-white/10 bg-white/10' : 'relative flex h-[60px] w-[58px] items-center justify-center'}>
                  <TI>{a.art}</TI>
                  {a.label === 'Chrome' && <span className="absolute right-1 top-1 h-6 w-6 rounded-full bg-linear-to-br from-[#d8cfe0] via-[#8d86a0] to-[#eee6ee]" />}
                  {a.label === 'Teams' && <span className="absolute right-1 top-2.5 h-4 w-3.5 rounded-full bg-white" />}
                  {a.dot && <span className={a.active ? 'absolute bottom-0 h-1 w-6 rounded-full bg-[#c092ff]' : 'absolute bottom-0 h-1 w-2 rounded-full bg-[#9c9aa2]'} />}
                </button>
              ))}
            </div>
            <div className="ml-auto flex items-center pr-[31px] text-[17px] leading-6">
              <button aria-label="Show hidden icons">
                <S className="h-[18px] w-[18px]" w={2.6}><path d="M4 20L14 9l10 11" /></S>
              </button>
              <button aria-label="Sync pending" className="ml-[26px]">
                <S className="h-7 w-7" w={1.7}>
                  <path d="M2 13A11 11 0 0 1 22 6.500M23.500 2.500V8h-5.500M9 24.500a11 11 0 0 1-6-6.500M3 24v-6h5.500" />
                  <circle cx="20" cy="19.5" r="6.8" fill="#ff9f0a" stroke="none" />
                </S>
              </button>
              <button className="ml-6 text-center">ENG<br />US</button>
              <button aria-label="Network, volume and battery" className="ml-[27px] flex items-center gap-2.5">
                <S className="h-[26px] w-[26px]" w={2.1}>
                  <path d="M2 11a17 17 0 0 1 24 0M6 15.500a11.500 11.500 0 0 1 16 0M9.500 20a6.500 6.500 0 0 1 9 0" />
                  <circle cx="14" cy="23.5" r="1.8" fill="currentColor" />
                </S>
                <S className="h-[26px] w-[26px]" w={1.9}>
                  <path d="M2.500 10h4.500l6-5.500v19L7 18H2.500z" />
                  <path d="M17 10.500c1.500 2 1.500 5 0 7" /><path d="M20.500 7.500c3 4 3 9 0 13M24 4.500c4 6 4 13 0 19" stroke="#686472" />
                </S>
                <S className="h-[26px] w-[26px]" w={2}>
                  <path d="M9 8h13a2 2 0 0 1 2 2v12a2 2 0 0 1-2 2H5a2 2 0 0 1-2-2v-5M26.500 13v6" />
                  <path d="M10 11h11v10H6v-4l4-3z" fill="currentColor" stroke="none" />
                  <path d="M5.500 2L2 9.500h3L3.500 15l6-7.500H6.500l2-5.500z" fill="currentColor" stroke="none" />
                </S>
              </button>
              <button className="ml-6 text-right">5:27 pm<br />17/11/2023</button>
              <button aria-label="Notification center" className="ml-[13px]">
                <S className="h-[22px] w-[22px]">
                  <path d="M3 21.500c2-2 2.500-4.500 2.500-10C5.500 6 9.500 3 14 3s8.500 3 8.500 8.500c0 5.500.5 8 2.500 10zM11 22.500c.5 3.500 5.500 3.500 6 0" />
                </S>
              </button>
            </div>
          </div>
        </div>
      </div>
    </footer>
  );
}

export default function App() {
  return (
    <div className="flex h-screen flex-col overflow-hidden bg-[#323232] font-['Open_Sans','Noto_Sans',sans-serif]">
      <TitleBar />
      <ToolBar />
      <div className="flex min-h-0 flex-1">
        <ToolsPanel />
        <Document />
        <div className="flex w-[26px] shrink-0 flex-col items-center bg-[#171717] pt-[71px]">
          <div className="h-[26px] w-[11px] bg-[#969696]" />
        </div>
        <RightRail />
      </div>
      <Taskbar />
    </div>
  );
}
